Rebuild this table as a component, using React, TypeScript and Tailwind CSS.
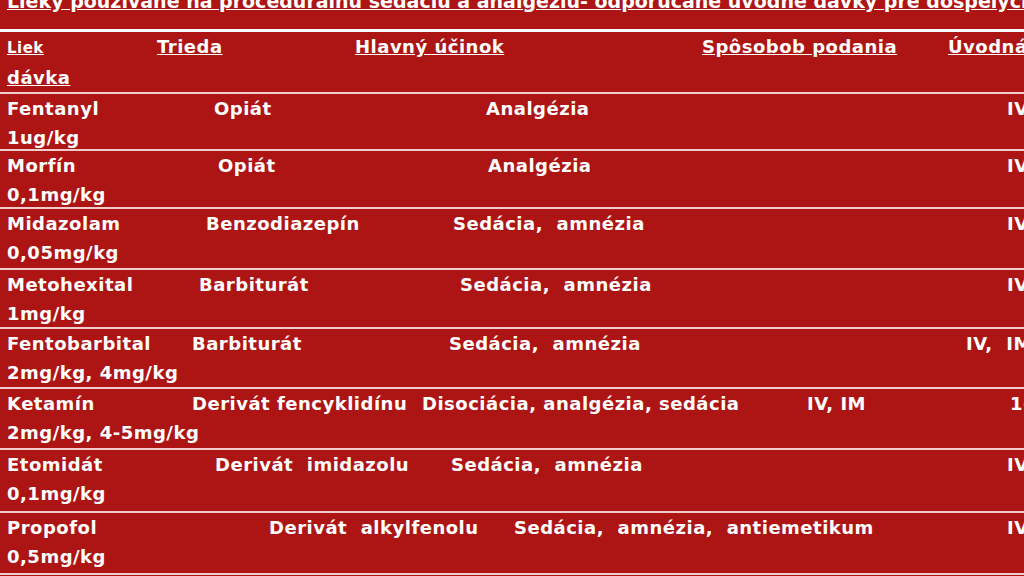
import React from 'react';

type Cell = [string, string];

const ROWS: { cells: Cell[]; dose: string; h: string }[] = [
  { h: 'h-[55px]', dose: '1ug/kg', cells: [['Fentanyl', 'w-[207px]'], ['Opiát', 'w-[272px]'], ['Analgézia', 'w-[521px]'], ['IV', '']] },
  { h: 'h-[56px]', dose: '0,1mg/kg', cells: [['Morfín', 'w-[211px]'], ['Opiát', 'w-[270px]'], ['Analgézia', 'w-[519px]'], ['IV', '']] },
  { h: 'h-[59px]', dose: '0,05mg/kg', cells: [['Midazolam', 'w-[199px]'], ['Benzodiazepín', 'w-[247px]'], ['Sedácia,  amnézia', 'w-[554px]'], ['IV', '']] },
  { h: 'h-[57px]', dose: '1mg/kg', cells: [['Metohexital', 'w-[192px]'], ['Barbiturát', 'w-[261px]'], ['Sedácia,  amnézia', 'w-[547px]'], ['IV', '']] },
  { h: 'h-[58px]', dose: '2mg/kg, 4mg/kg', cells: [['Fentobarbital', 'w-[185px]'], ['Barbiturát', 'w-[257px]'], ['Sedácia,  amnézia', 'w-[517px]'], ['IV,  IM', '']] },
  { h: 'h-[59px]', dose: '2mg/kg, 4-5mg/kg', cells: [['Ketamín', 'w-[185px]'], ['Derivát fencyklidínu', 'w-[230px]'], ['Disociácia, analgézia, sedácia', 'w-[385px]'], ['IV, IM', 'w-[203px]'], ['1-', '']] },
  { h: 'h-[61px]', dose: '0,1mg/kg', cells: [['Etomidát', 'w-[208px]'], ['Derivát  imidazolu', 'w-[236px]'], ['Sedácia,  amnézia', 'w-[556px]'], ['IV', '']] },
  { h: 'h-[60px]', dose: '0,5mg/kg', cells: [['Propofol', 'w-[262px]'], ['Derivát  alkylfenolu', 'w-[245px]'], ['Sedácia,  amnézia,  antiemetikum', 'w-[493px]'], ['IV', '']] },
];

function Rule() {
  return <div className="h-[2px] bg-[#f2cccc]" />;
}

export default function App() {
  return (
    <div className="w-[1024px] h-[576px] overflow-hidden bg-[#ad1515] text-white font-bold font-['DejaVu_Sans',sans-serif] text-[18px] tracking-[0.5px] leading-[29px]">
      {/* slide title, cut off at the top */}
      <div className="h-[29px] overflow-hidden">
        <p className="-mt-[13px] pl-[7px] text-[19px] tracking-normal underline whitespace-nowrap">
          Lieky používané na procedurálnu sedáciu a analgéziu- odporúčané úvodné dávky pre dospelých
        </p>
      </div>
      <div className="h-[3px] bg-white" />

      {/* header */}
      <div className="h-[60px] pl-[7px] underline whitespace-nowrap">
        <div className="flex items-baseline">
          <span className="w-[150px] shrink-0 text-[15px]">Liek</span>
          <span className="w-[198px] shrink-0">Trieda</span>
          <span className="w-[347px] shrink-0">Hlavný účinok</span>
          <span className="w-[246px] shrink-0">Spôsobob podania</span>
          <span>Úvodná</span>
        </div>
        <div>dávka</div>
      </div>
      <Rule />

      {ROWS.map((r) => (
        <div key={r.cells[0][0]}>
          <div className={`${r.h} pl-[7px] whitespace-pre`}>
            <div className="flex">
              {r.cells.map(([t, w]) => (
                <span key={t} className={`${w} shrink-0`}>{t}</span>
              ))}
            </div>
            <div>{r.dose}</div>
          </div>
          <Rule />
        </div>
      ))}
    </div>
  );
}
